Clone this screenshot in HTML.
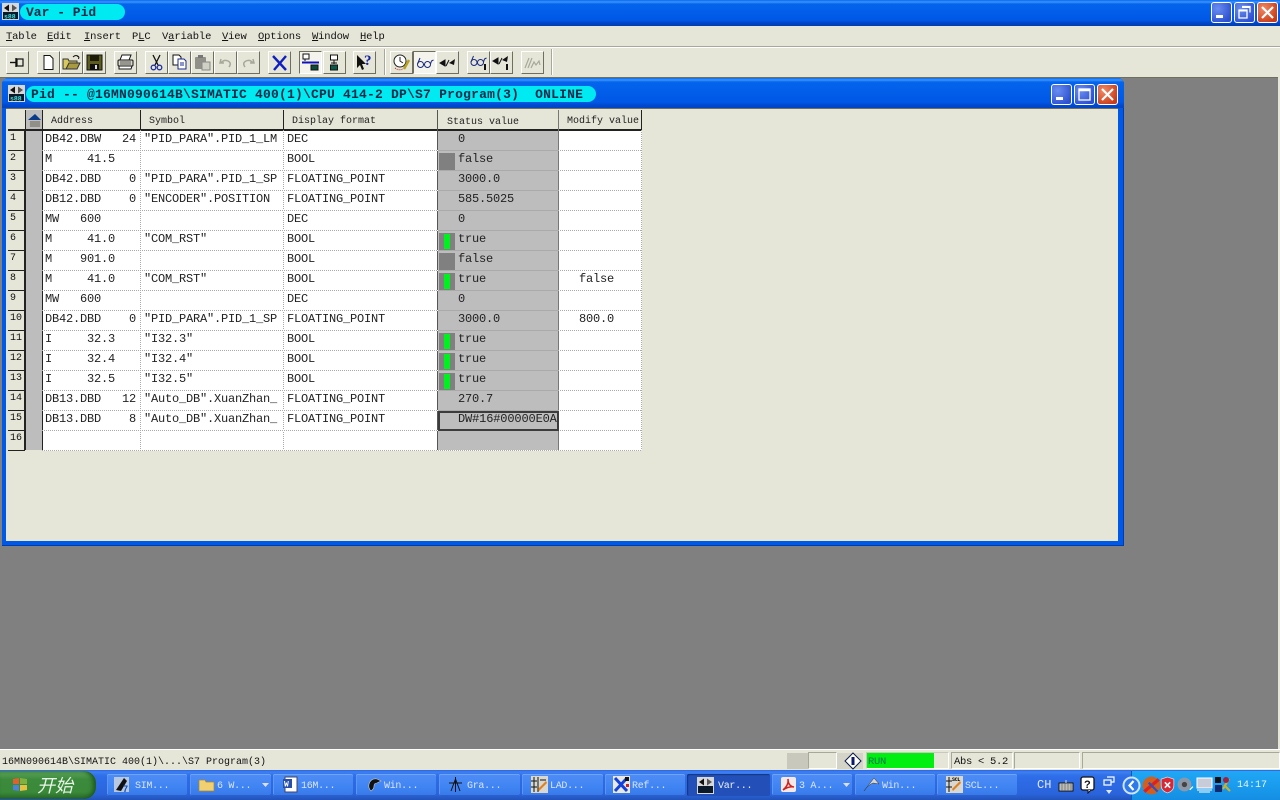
<!DOCTYPE html>
<html><head><meta charset="utf-8"><title>Var - Pid</title>
<style>
html,body{margin:0;padding:0;width:1280px;height:800px;overflow:hidden;background:#808080}
*{box-sizing:border-box}
.a{position:absolute}
body{font-family:"Liberation Mono","Noto Sans CJK SC",monospace;font-size:12px;color:#111}
.t{position:absolute;white-space:pre;line-height:14px}
.tb{position:absolute;top:51px;height:23px;background:#e6e6d8;border:1px solid;border-color:#fff #6f6f60 #6f6f60 #fff}
.tb svg,.ic svg{display:block;width:100%;height:100%}
.pill{position:absolute;background:#00eaf2;border-radius:8px;font-weight:bold;color:#0b2a4a;white-space:pre}
.wb{position:absolute;width:21px;height:21px;border:1px solid #fff;border-radius:3px;background:radial-gradient(circle at 30% 30%,#6a8df0,#2c50d0 80%)}
.wb.c{background:radial-gradient(circle at 30% 30%,#ef8a66,#c93c18 80%)}
.wb svg{display:block;width:19px;height:19px}
.cell{position:absolute;height:14px;line-height:14px;white-space:pre;color:#222;letter-spacing:-.2px}
.rh{position:absolute;left:8px;width:17px;height:20px;background:#e6e6d8;border-bottom:1px solid #222;border-right:1px solid #222;font-size:10px;line-height:16px;padding-left:2px;color:#111}
.hl{position:absolute;left:42px;width:599px;height:1px;background:repeating-linear-gradient(90deg,#aaa 0 1px,#fff 1px 2px)}
.hls{position:absolute;left:438px;width:120px;height:1px;background:#aaa}
.vl{position:absolute;top:130px;height:320px;width:1px;background:repeating-linear-gradient(180deg,#aaa 0 1px,#fff 1px 2px)}
.lamp{position:absolute;left:439px;width:16px;height:17px;background:#808080}
.lamp i{position:absolute;left:5px;top:1px;width:6px;height:15px;background:#00f020}
.h{position:absolute;top:110px;height:20px;background:#e6e6d8;border-right:1px solid #222;font-size:10px;line-height:24px;white-space:pre;color:#222;overflow:hidden}
.btn{position:absolute;top:774px;height:22px;background:linear-gradient(180deg,#4f8df5,#3f84f3 60%,#3878ea);border-radius:2px;box-shadow:inset 0 1px 0 #6ea4fb,inset 0 -1px 0 #2a5fcc,inset 1px 0 0 #5c96f7;color:#d8e4ff;font-size:10px;letter-spacing:-.3px;line-height:22px;white-space:pre}
.btn.act{background:#2250b8;box-shadow:inset 1px 1px 1px #15347f;color:#e8eeff}
.ic{position:absolute;width:17px;height:17px;top:2px;left:6px}
.btn span{position:absolute;top:2px;left:28px}
.sb{position:absolute;top:752px;height:17px;border:1px solid;border-color:#a8a89a #fff #fff #a8a89a}
.m{position:absolute;top:30px;line-height:14px;font-size:10.5px;letter-spacing:-.15px;white-space:pre;color:#111}
.m u{text-decoration:underline}
</style></head><body>

<!-- main title bar -->
<div class="a" style="left:0;top:0;width:1280px;height:26px;background:linear-gradient(180deg,#0a6af0 0,#3a93ff 2px,#0464ec 4px,#0058e6 20px,#0046c8 23px,#003cb0 26px)"></div>
<svg class="a" style="left:2px;top:3px" width="17" height="17" viewBox="0 0 17 17"><rect width="17" height="17" fill="#d8d8d8"/><path d="M2 5l5-3.500v7z" fill="#111"/><path d="M15 5l-5-3.500v7z" fill="#555"/><rect x="1" y="9" width="15" height="7" fill="#0a1a2a"/><text x="2" y="15.500" font-size="6.500" font-family="Liberation Mono" fill="#3fe0e0" font-weight="bold">s88</text></svg>
<div class="pill" style="left:20px;top:4px;width:105px;height:16px;line-height:18px;padding-left:6px;font-size:13px;border-radius:8px">Var - Pid</div>
<div class="wb" style="left:1211px;top:2px"><svg viewBox="0 0 19 19"><rect x="4" y="12" width="7" height="3" fill="#fff"/></svg></div>
<div class="wb" style="left:1234px;top:2px"><svg viewBox="0 0 19 19"><path d="M7 3.500h8v6M4 7h8v8H4z" fill="none" stroke="#fff" stroke-width="1.300"/><path d="M7 4h8M4 7.500h8" stroke="#fff" stroke-width="2"/></svg></div>
<div class="wb c" style="left:1257px;top:2px"><svg viewBox="0 0 19 19"><path d="M4 4l11 11M15 4L4 15" stroke="#fff" stroke-width="2.200"/></svg></div>

<!-- menu -->
<div class="a" style="left:0;top:26px;width:1280px;height:51px;background:#e6e6d8"></div>
<div class="a" style="left:0;top:46px;width:1280px;height:1px;background:#a8a89a"></div>
<div class="a" style="left:0;top:47px;width:1280px;height:1px;background:#fff"></div>
<div class="m" style="left:6px"><u>T</u>able</div>
<div class="m" style="left:47px"><u>E</u>dit</div>
<div class="m" style="left:84px"><u>I</u>nsert</div>
<div class="m" style="left:132px">P<u>L</u>C</div>
<div class="m" style="left:162px">V<u>a</u>riable</div>
<div class="m" style="left:222px"><u>V</u>iew</div>
<div class="m" style="left:258px"><u>O</u>ptions</div>
<div class="m" style="left:312px"><u>W</u>indow</div>
<div class="m" style="left:360px"><u>H</u>elp</div>

<!-- toolbar -->
<div class="tb" style="left:6px;width:23px"><svg viewBox="0 0 21 21"><path d="M3 10.500h6" stroke="#111" stroke-width="1.400"/><path d="M9 6v9" stroke="#111" stroke-width="1.400"/><rect x="10" y="7" width="6" height="7" fill="#e6e6d8" stroke="#111" stroke-width="1.200"/></svg></div>
<div class="tb" style="left:37px;width:23px"><svg viewBox="0 0 21 21"><path d="M6 3.500h6l3 3v11H6z" fill="#fff" stroke="#111"/></svg></div>
<div class="tb" style="left:60px;width:23px"><svg viewBox="0 0 21 21"><path d="M2 7h5l1 2h8v8H2z" fill="#d8c860" stroke="#333"/><path d="M5 17l3-6h11l-3 6z" fill="#a89a40" stroke="#333"/><path d="M12 5q3-3 6 0M18 5l-2-1M18 5l-.5 2" fill="none" stroke="#111"/></svg></div>
<div class="tb" style="left:83px;width:23px"><svg viewBox="0 0 21 21"><rect x="3" y="3" width="15" height="15" fill="#5c5c20" stroke="#111"/><rect x="6" y="3" width="9" height="6" fill="#1c1c08"/><rect x="6" y="12" width="9" height="6" fill="#111"/><rect x="11" y="13" width="2" height="4" fill="#ddd"/></svg></div>
<div class="tb" style="left:114px;width:23px"><svg viewBox="0 0 21 21"><path d="M7 3h9l-2 5H5z" fill="#fff" stroke="#111"/><rect x="3" y="8" width="15" height="6" rx="1" fill="#d8d8c8" stroke="#111"/><path d="M4 14h13l-1 3H4z" fill="#fff" stroke="#111"/><path d="M5 10h11M5 12h11" stroke="#555"/></svg></div>
<div class="tb" style="left:145px;width:23px"><svg viewBox="0 0 21 21"><path d="M7 3l5 10M14 3L9 13" stroke="#111" stroke-width="1.300"/><circle cx="7.500" cy="15.500" r="2.300" fill="none" stroke="#2030a0" stroke-width="1.300"/><circle cx="13.500" cy="15.500" r="2.300" fill="none" stroke="#2030a0" stroke-width="1.300"/></svg></div>
<div class="tb" style="left:168px;width:23px"><svg viewBox="0 0 21 21"><path d="M4 3h6l2 2v8H4z" fill="#fff" stroke="#111"/><path d="M9 7h6l2 2v8H9z" fill="#fff" stroke="#1a2a90"/><path d="M11 11h4M11 13h4" stroke="#1a2a90"/></svg></div>
<div class="tb" style="left:191px;width:23px"><svg viewBox="0 0 21 21"><rect x="3" y="5" width="11" height="12" rx="1" fill="#909088"/><rect x="6" y="3" width="5" height="3" fill="#777"/><rect x="10" y="10" width="8" height="8" fill="#d0d0c4" stroke="#888"/></svg></div>
<div class="tb" style="left:214px;width:23px"><svg viewBox="0 0 21 21"><path d="M6 7l-1 4h4M6 11q3-4 7-2t1 6" fill="none" stroke="#a8a89a" stroke-width="1.500"/></svg></div>
<div class="tb" style="left:237px;width:23px"><svg viewBox="0 0 21 21"><path d="M15 7l1 4h-4M15 11q-3-4-7-2T7 15" fill="none" stroke="#a8a89a" stroke-width="1.500"/></svg></div>
<div class="tb" style="left:268px;width:23px"><svg viewBox="0 0 21 21"><path d="M4 4l13 14M17 4L5 18" stroke="#1020c0" stroke-width="2.400"/></svg></div>
<div class="tb" style="left:299px;width:23px;background:#f4f4ec;border-color:#6f6f60 #fff #fff #6f6f60"><svg viewBox="0 0 21 21"><rect x="3" y="2" width="6" height="5" fill="#fff" stroke="#111"/><path d="M5 7v2" stroke="#111"/><path d="M2 10.500h17" stroke="#1010c0" stroke-width="2"/><rect x="11" y="13" width="7" height="5" fill="#0a4a3a" stroke="#111"/></svg></div>
<div class="tb" style="left:323px;width:23px"><svg viewBox="0 0 21 21"><rect x="6.500" y="3" width="7" height="5" fill="#fff" stroke="#111"/><path d="M10 8v4M7 11h6" stroke="#111"/><rect x="6.500" y="13" width="7" height="5" fill="#0a5a4a" stroke="#111"/></svg></div>
<div class="tb" style="left:353px;width:23px"><svg viewBox="0 0 21 21"><path d="M3 3v13l3-3 2 5 2-1-2-5h4z" fill="#111"/><text x="10" y="13" font-size="15" font-weight="bold" font-family="Liberation Serif" fill="#1020a0">?</text></svg></div>
<div class="a" style="left:384px;top:49px;width:1px;height:26px;background:#a8a89a"></div>
<div class="a" style="left:385px;top:49px;width:1px;height:26px;background:#fff"></div>
<div class="tb" style="left:390px;width:23px"><svg viewBox="0 0 21 21"><circle cx="9" cy="9" r="6" fill="#fff" stroke="#222"/><path d="M9 5v4l3 2" stroke="#222" fill="none"/><path d="M13 17l5-9" stroke="#b8a020" stroke-width="2.500"/><path d="M4 16q4 3 8 1" stroke="#b02020" fill="none" stroke-dasharray="1 1"/></svg></div>
<div class="tb" style="left:413px;width:23px;background:#f4f4ec;border-color:#6f6f60 #fff #fff #6f6f60"><svg viewBox="0 0 21 21"><circle cx="6.500" cy="12.500" r="3" fill="none" stroke="#1a2a80"/><circle cx="13.500" cy="12.500" r="3" fill="none" stroke="#1a2a80"/><path d="M3.500 12L6 6M9.500 12.500h1M16.500 12l1-3 2-1" fill="none" stroke="#1a2a80"/></svg></div>
<div class="tb" style="left:436px;width:23px"><svg viewBox="0 0 21 21"><path d="M3 11l5-3v6zM9 14l3-6" fill="#111" stroke="#111"/><path d="M18 7l-1 6-5-2z" fill="#111"/></svg></div>
<div class="tb" style="left:467px;width:23px"><svg viewBox="0 0 21 21"><circle cx="6" cy="10.500" r="3" fill="none" stroke="#1a2a80"/><circle cx="12.500" cy="10.500" r="3" fill="none" stroke="#1a2a80"/><path d="M3 10l2.500-6M8.800 10.500h1M15.500 10l1-3 2-1" fill="none" stroke="#1a2a80"/><rect x="16" y="12" width="2" height="6" fill="#111"/></svg></div>
<div class="tb" style="left:490px;width:23px"><svg viewBox="0 0 21 21"><path d="M2 9l5-3v6zM8 12l3-6" fill="#111" stroke="#111"/><path d="M17 4l-1 6-5-2z" fill="#111"/><rect x="15" y="12" width="2" height="6" fill="#111"/></svg></div>
<div class="tb" style="left:521px;width:23px"><svg viewBox="0 0 21 21"><path d="M3 16L7 6M6 16l4-10M9 16l3-6 2 3 3-4 1 4" fill="none" stroke="#a8a89a" stroke-width="1.200"/></svg></div>
<div class="a" style="left:551px;top:49px;width:1px;height:26px;background:#a8a89a"></div>
<div class="a" style="left:552px;top:49px;width:1px;height:26px;background:#fff"></div>

<!-- MDI workspace -->
<div class="a" style="left:0;top:77px;width:1278px;height:1px;background:#6f6f60"></div>
<div class="a" style="left:1278px;top:77px;width:2px;height:673px;background:#e6e6d8"></div>

<!-- child window -->
<div class="a" style="left:2px;top:78px;width:1122px;height:468px;background:#0058e6;border-radius:6px 6px 0 0;border-right:1px solid #003cb0;border-bottom:1px solid #003cb0"></div>
<div class="a" style="left:2px;top:78px;width:1122px;height:30px;border-radius:6px 6px 0 0;background:linear-gradient(180deg,#0a6af0 0,#3a93ff 2px,#0464ec 4px,#0058e6 24px,#0046c8 28px)"></div>
<div class="a" style="left:6px;top:108px;width:1112px;height:433px;background:#e6e6d8;border-top:1px solid #6f6f60"></div>
<svg class="a" style="left:8px;top:85px" width="17" height="17" viewBox="0 0 17 17"><rect width="17" height="17" fill="#d8d8d8"/><path d="M2 5l5-3.500v7z" fill="#111"/><path d="M15 5l-5-3.500v7z" fill="#555"/><rect x="1" y="9" width="15" height="7" fill="#0a1a2a"/><text x="2" y="15.500" font-size="6.500" font-family="Liberation Mono" fill="#3fe0e0" font-weight="bold">s88</text></svg>
<div class="pill" style="left:26px;top:86px;width:570px;height:16px;line-height:18px;padding-left:5px;font-size:13px;letter-spacing:.2px">Pid -- @16MN090614B\SIMATIC 400(1)\CPU 414-2 DP\S7 Program(3)  ONLINE</div>
<div class="wb" style="left:1051px;top:84px"><svg viewBox="0 0 19 19"><rect x="4" y="12" width="7" height="3" fill="#fff"/></svg></div>
<div class="wb" style="left:1074px;top:84px"><svg viewBox="0 0 19 19"><rect x="4" y="4" width="11" height="11" fill="none" stroke="#fff" stroke-width="1.300"/><path d="M4 5h11" stroke="#fff" stroke-width="2.500"/></svg></div>
<div class="wb c" style="left:1097px;top:84px"><svg viewBox="0 0 19 19"><path d="M4 4l11 11M15 4L4 15" stroke="#fff" stroke-width="2.200"/></svg></div>

<!-- table -->
<div class="a" style="left:42px;top:130px;width:599px;height:320px;background:#fff"></div>
<div class="a" style="left:25px;top:130px;width:17px;height:320px;background:#bdbdbd"></div>
<div class="a" style="left:438px;top:130px;width:120px;height:320px;background:#bdbdbd"></div>
<div class="a" style="left:8px;top:130px;width:1px;height:320px;background:#888"></div>
<div class="a" style="left:42px;top:110px;width:1px;height:340px;background:#222"></div>
<div class="a" style="left:25px;top:110px;width:1px;height:340px;background:#222"></div>
<div class="a" style="left:8px;top:110px;width:17px;height:20px;background:#e6e6d8"></div>
<div class="a" style="left:26px;top:110px;width:16px;height:20px;background:#bdbdbd"></div>
<svg class="a" style="left:27px;top:112px" width="15" height="16" viewBox="0 0 15 16"><path d="M1 8l7-6 6 6z" fill="#0a3a8a"/><rect x="2" y="9" width="12" height="6" fill="#e6e6d8"/><path d="M2 10h12M2 12h12M2 14h12M4 9v6M6 9v6M8 9v6M10 9v6M12 9v6" stroke="#333" stroke-width=".6"/></svg>
<div class="h" style="left:43px;width:98px;padding-left:8px">Address</div>
<div class="h" style="left:141px;width:143px;padding-left:8px">Symbol</div>
<div class="h" style="left:284px;width:154px;padding-left:8px">Display format</div>
<div class="h" style="left:438px;width:121px;padding-left:9px;top:111px;height:19px">Status value</div>
<div class="h" style="left:559px;width:83px;padding-left:8px">Modify value</div>
<div class="a" style="left:8px;top:129px;width:634px;height:2px;background:#222"></div>

<div class="vl" style="left:140px"></div><div class="vl" style="left:283px"></div><div class="vl" style="left:641px"></div>
<div class="a" style="left:437px;top:110px;width:1px;height:340px;background:#555"></div>
<div class="a" style="left:558px;top:110px;width:1px;height:340px;background:#777"></div>

<div class="hl" style="top:150px"></div><div class="hl" style="top:170px"></div><div class="hl" style="top:190px"></div><div class="hl" style="top:210px"></div><div class="hl" style="top:230px"></div><div class="hl" style="top:250px"></div><div class="hl" style="top:270px"></div><div class="hl" style="top:290px"></div><div class="hl" style="top:310px"></div><div class="hl" style="top:330px"></div><div class="hl" style="top:350px"></div><div class="hl" style="top:370px"></div><div class="hl" style="top:390px"></div><div class="hl" style="top:410px"></div><div class="hl" style="top:430px"></div><div class="hl" style="top:450px"></div>
<div class="hls" style="top:150px"></div><div class="hls" style="top:170px"></div><div class="hls" style="top:190px"></div><div class="hls" style="top:210px"></div><div class="hls" style="top:230px"></div><div class="hls" style="top:250px"></div><div class="hls" style="top:270px"></div><div class="hls" style="top:290px"></div><div class="hls" style="top:310px"></div><div class="hls" style="top:330px"></div><div class="hls" style="top:350px"></div><div class="hls" style="top:370px"></div><div class="hls" style="top:390px"></div><div class="hls" style="top:410px"></div>

<div class="rh" style="top:131px">1</div><div class="rh" style="top:151px">2</div><div class="rh" style="top:171px">3</div><div class="rh" style="top:191px">4</div><div class="rh" style="top:211px">5</div><div class="rh" style="top:231px">6</div><div class="rh" style="top:251px">7</div><div class="rh" style="top:271px">8</div><div class="rh" style="top:291px">9</div><div class="rh" style="top:311px">10</div><div class="rh" style="top:331px">11</div><div class="rh" style="top:351px">12</div><div class="rh" style="top:371px">13</div><div class="rh" style="top:391px">14</div><div class="rh" style="top:411px">15</div><div class="rh" style="top:431px">16</div>

<!-- rows: address -->
<div class="cell" style="left:45px;top:132px">DB42.DBW   24</div>
<div class="cell" style="left:45px;top:152px">M     41.5</div>
<div class="cell" style="left:45px;top:172px">DB42.DBD    0</div>
<div class="cell" style="left:45px;top:192px">DB12.DBD    0</div>
<div class="cell" style="left:45px;top:212px">MW   600</div>
<div class="cell" style="left:45px;top:232px">M     41.0</div>
<div class="cell" style="left:45px;top:252px">M    901.0</div>
<div class="cell" style="left:45px;top:272px">M     41.0</div>
<div class="cell" style="left:45px;top:292px">MW   600</div>
<div class="cell" style="left:45px;top:312px">DB42.DBD    0</div>
<div class="cell" style="left:45px;top:332px">I     32.3</div>
<div class="cell" style="left:45px;top:352px">I     32.4</div>
<div class="cell" style="left:45px;top:372px">I     32.5</div>
<div class="cell" style="left:45px;top:392px">DB13.DBD   12</div>
<div class="cell" style="left:45px;top:412px">DB13.DBD    8</div>
<!-- symbol -->
<div class="cell" style="left:144px;top:132px">"PID_PARA".PID_1_LM</div>
<div class="cell" style="left:144px;top:172px">"PID_PARA".PID_1_SP</div>
<div class="cell" style="left:144px;top:192px">"ENCODER".POSITION</div>
<div class="cell" style="left:144px;top:232px">"COM_RST"</div>
<div class="cell" style="left:144px;top:272px">"COM_RST"</div>
<div class="cell" style="left:144px;top:312px">"PID_PARA".PID_1_SP</div>
<div class="cell" style="left:144px;top:332px">"I32.3"</div>
<div class="cell" style="left:144px;top:352px">"I32.4"</div>
<div class="cell" style="left:144px;top:372px">"I32.5"</div>
<div class="cell" style="left:144px;top:392px">"Auto_DB".XuanZhan_</div>
<div class="cell" style="left:144px;top:412px">"Auto_DB".XuanZhan_</div>
<!-- format -->
<div class="cell" style="left:287px;top:132px">DEC</div>
<div class="cell" style="left:287px;top:152px">BOOL</div>
<div class="cell" style="left:287px;top:172px">FLOATING_POINT</div>
<div class="cell" style="left:287px;top:192px">FLOATING_POINT</div>
<div class="cell" style="left:287px;top:212px">DEC</div>
<div class="cell" style="left:287px;top:232px">BOOL</div>
<div class="cell" style="left:287px;top:252px">BOOL</div>
<div class="cell" style="left:287px;top:272px">BOOL</div>
<div class="cell" style="left:287px;top:292px">DEC</div>
<div class="cell" style="left:287px;top:312px">FLOATING_POINT</div>
<div class="cell" style="left:287px;top:332px">BOOL</div>
<div class="cell" style="left:287px;top:352px">BOOL</div>
<div class="cell" style="left:287px;top:372px">BOOL</div>
<div class="cell" style="left:287px;top:392px">FLOATING_POINT</div>
<div class="cell" style="left:287px;top:412px">FLOATING_POINT</div>
<!-- status -->
<div class="lamp" style="top:153px"></div><div class="lamp" style="top:233px"><i></i></div><div class="lamp" style="top:253px"></div><div class="lamp" style="top:273px"><i></i></div><div class="lamp" style="top:333px"><i></i></div><div class="lamp" style="top:353px"><i></i></div><div class="lamp" style="top:373px"><i></i></div>
<div class="cell" style="left:458px;top:132px">0</div>
<div class="cell" style="left:458px;top:152px">false</div>
<div class="cell" style="left:458px;top:172px">3000.0</div>
<div class="cell" style="left:458px;top:192px">585.5025</div>
<div class="cell" style="left:458px;top:212px">0</div>
<div class="cell" style="left:458px;top:232px">true</div>
<div class="cell" style="left:458px;top:252px">false</div>
<div class="cell" style="left:458px;top:272px">true</div>
<div class="cell" style="left:458px;top:292px">0</div>
<div class="cell" style="left:458px;top:312px">3000.0</div>
<div class="cell" style="left:458px;top:332px">true</div>
<div class="cell" style="left:458px;top:352px">true</div>
<div class="cell" style="left:458px;top:372px">true</div>
<div class="cell" style="left:458px;top:392px">270.7</div>
<div class="a" style="left:438px;top:411px;width:121px;height:20px;border:2px solid #3c3c3c"></div>
<div class="cell" style="left:458px;top:412px;letter-spacing:-.15px">DW#16#00000E0A</div>
<!-- modify -->
<div class="cell" style="left:579px;top:272px">false</div>
<div class="cell" style="left:579px;top:312px">800.0</div>

<!-- status bar -->
<div class="a" style="left:0;top:749px;width:1280px;height:21px;background:#e6e6d8;border-top:1px solid #fff"></div>
<div class="t" style="left:2px;top:754px;font-size:10px;line-height:14px;padding-top:2px">16MN090614B\SIMATIC 400(1)\...\S7 Program(3)</div>
<div class="a" style="left:787px;top:753px;width:21px;height:16px;background:#c8c8bc"></div>
<div class="sb" style="left:808px;width:29px"></div>
<div class="a" style="left:837px;top:753px;width:26px;height:16px;background:#d4d4c8"></div>
<svg class="a" style="left:844px;top:752px" width="18" height="18" viewBox="0 0 18 18"><path d="M9 1l8 8-8 8-8-8z" fill="#fff" stroke="#0a1a4a"/><rect x="7.500" y="5" width="3" height="8" fill="#0a1a6a"/></svg>
<div class="sb" style="left:866px;width:83px;border-color:#c8c8bc #fff #fff #c8c8bc"></div>
<div class="a" style="left:867px;top:753px;width:67px;height:15px;background:#00ee10"></div>
<div class="t" style="left:868px;top:755px;font-size:10.5px;letter-spacing:-.3px;color:#075">RUN</div>
<div class="sb" style="left:951px;width:62px"></div>
<div class="t" style="left:954px;top:755px;font-size:10.5px;letter-spacing:-.3px">Abs &lt; 5.2</div>
<div class="sb" style="left:1014px;width:66px"></div>
<div class="sb" style="left:1082px;width:198px"></div>

<!-- taskbar -->
<div class="a" style="left:0;top:770px;width:1280px;height:30px;background:linear-gradient(180deg,#2c64e4 0,#3d80f0 2px,#2e6ee8 6px,#2a64dc 24px,#2252b8 30px)"></div>
<div class="a" style="left:0;top:771px;width:96px;height:28px;background:linear-gradient(180deg,#5fa85f,#3c8a3c 30%,#3a8a3a 75%,#2a6a2a);border-radius:0 12px 12px 0;box-shadow:inset -3px 0 4px #1d5a1d"></div>
<svg class="a" style="left:11px;top:776px" width="18" height="18" viewBox="0 0 18 18"><path d="M2 3l6-1v6H2z" fill="#e06030"/><path d="M9 2l7 1v5H9z" fill="#80b040"/><path d="M2 9h6v6l-6-1z" fill="#5080d8"/><path d="M9 9h7v5l-7 1z" fill="#e8c040"/></svg>
<div class="t" style="left:37px;top:774px;font-family:'Noto Sans CJK SC',sans-serif;font-style:italic;font-size:18px;line-height:22px;color:#e8f4e8">开始</div>

<div class="btn" style="left:107px;width:80px"><div class="ic"><svg viewBox="0 0 17 17"><rect x="1" y="1" width="15" height="15" fill="#b8c8e0"/><path d="M3 14L11 2l3 3-6 10z" fill="#111"/><text x="10" y="16" font-size="9" font-weight="bold" fill="#0a50c0" font-family="Liberation Sans">7</text></svg></div><span>SIM...</span></div>
<div class="btn" style="left:190px;width:81px"><div class="ic" style="left:8px"><svg viewBox="0 0 17 17"><path d="M1 4h6l1 2h8v9H1z" fill="#f0d070" stroke="#a88830" stroke-width=".7"/></svg></div><span style="left:27px">6 W...</span><svg class="a" style="left:72px;top:9px" width="7" height="4"><path d="M0 0h7L3.500 4z" fill="#dde"/></svg></div>
<div class="btn" style="left:273px;width:80px"><div class="ic" style="left:9px"><svg viewBox="0 0 17 17"><rect x="3" y="1" width="12" height="15" fill="#fff" stroke="#446"/><rect x="1" y="3" width="9" height="9" fill="#2850a8"/><text x="2" y="10.500" font-size="8" fill="#fff" font-weight="bold">W</text></svg></div><span>16M...</span></div>
<div class="btn" style="left:356px;width:80px"><div class="ic" style="left:10px"><svg viewBox="0 0 17 17"><path d="M3 8q2-6 8-5l4 2-4 2q-3 0-3 3t-3 5q-3-3-2-7z" fill="#111" stroke="#ccc" stroke-width=".6"/></svg></div><span>Win...</span></div>
<div class="btn" style="left:439px;width:81px"><div class="ic" style="left:8px"><svg viewBox="0 0 17 17"><path d="M8.500 1v15M2 7h13M8.500 3L4 15M8.500 3l4.500 12" stroke="#111" fill="none"/></svg></div><span>Gra...</span></div>
<div class="btn" style="left:522px;width:81px"><div class="ic" style="left:9px"><svg viewBox="0 0 17 17"><rect width="17" height="17" fill="#d8d8d0"/><path d="M0 5h6M0 11h6M3 1v15M7 1v15M9 4h6" stroke="#111"/><path d="M8 15l8-8-1-2-8 8z" fill="#e08020"/></svg></div><span>LAD...</span></div>
<div class="btn" style="left:605px;width:80px"><div class="ic" style="left:8px"><svg viewBox="0 0 17 17"><rect width="17" height="17" fill="#e8e8e0"/><path d="M2 2l12 13M14 2L2 15" stroke="#1040e0" stroke-width="3"/><rect x="12" y="1" width="4" height="4" fill="#111"/><rect x="13" y="8" width="3" height="3" fill="#d02020"/></svg></div><span style="left:27px">Ref...</span></div>
<div class="btn act" style="left:687px;width:83px"><div class="ic" style="left:10px;top:3px"><svg viewBox="0 0 17 17"><rect width="17" height="17" fill="#d8d8d8"/><path d="M2 5l5-3.500v7z" fill="#111"/><path d="M15 5l-5-3.500v7z" fill="#555"/><rect x="1" y="9" width="15" height="7" fill="#0a1a2a"/></svg></div><span style="left:31px">Var...</span></div>
<div class="btn" style="left:772px;width:80px"><div class="ic" style="left:8px"><svg viewBox="0 0 17 17"><rect x="1" y="1" width="15" height="15" rx="2" fill="#f4e8e8"/><path d="M8 3q1 6-5 11 6-4 11-3-6-1-6-8z" fill="none" stroke="#d02020" stroke-width="1.500"/></svg></div><span style="left:27px">3 A...</span><svg class="a" style="left:71px;top:9px" width="7" height="4"><path d="M0 0h7L3.500 4z" fill="#dde"/></svg></div>
<div class="btn" style="left:855px;width:80px"><div class="ic" style="left:8px"><svg viewBox="0 0 17 17"><path d="M1 15L11 2l5 6-6-1q-5 2-9 8z" fill="#d8d8d0" stroke="#333" stroke-width=".5"/></svg></div><span style="left:27px">Win...</span></div>
<div class="btn" style="left:937px;width:80px"><div class="ic" style="left:9px"><svg viewBox="0 0 17 17"><rect width="17" height="17" fill="#d8d8d0"/><path d="M0 5h6M0 11h6M3 1v15" stroke="#111"/><path d="M7 15l8-8-1-2-8 8z" fill="#e08020"/><text x="6" y="5" font-size="5" font-weight="bold">SCL</text></svg></div><span style="left:28px">SCL...</span></div>

<div class="t" style="left:1037px;top:778px;color:#dfe8ff;font-size:12px">CH</div>
<svg class="a" style="left:1058px;top:777px" width="16" height="16" viewBox="0 0 16 16"><rect x="1" y="6" width="14" height="8" fill="#e0e0d8" stroke="#111"/><path d="M2 8h12M2 10h12M2 12h12M4 6v8M7 6v8M10 6v8M13 6v8" stroke="#555" stroke-width=".6"/><path d="M8 6V3" stroke="#ddd"/></svg>
<svg class="a" style="left:1080px;top:776px" width="16" height="18" viewBox="0 0 16 18"><rect x="1" y="1" width="13" height="13" rx="2" fill="#fff" stroke="#111" stroke-width="1.300"/><text x="4" y="12" font-size="11" font-weight="bold" fill="#111" font-family="Liberation Sans">?</text><path d="M8 14v3l3-3" fill="#fff" stroke="#111"/></svg>
<svg class="a" style="left:1103px;top:775px" width="12" height="20" viewBox="0 0 12 20"><path d="M4 2h7v5H8M1 5h7v5H1z" fill="none" stroke="#fff" stroke-width="1.200"/><path d="M3 15h6l-3 4z" fill="#e0e8ff"/></svg>

<!-- tray -->
<div class="a" style="left:1131px;top:771px;width:149px;height:29px;background:linear-gradient(180deg,#20a8f4,#1a9cee 50%,#148ee2);border-left:1px solid #0a5cb8"></div>
<svg class="a" style="left:1122px;top:776px" width="19" height="19" viewBox="0 0 19 19"><circle cx="9.500" cy="9.500" r="9" fill="#cfe4ff"/><circle cx="9.500" cy="9.500" r="7" fill="#2d7ae8"/><path d="M11.500 5l-4 4.500 4 4.500" fill="none" stroke="#fff" stroke-width="2.200"/></svg>
<svg class="a" style="left:1142px;top:776px" width="19" height="19" viewBox="0 0 17 17"><circle cx="8.500" cy="8.500" r="8" fill="#d06020"/><path d="M2 14L15 3" stroke="#e02020" stroke-width="3"/><path d="M6 6l8 8" stroke="#3050c0" stroke-width="2"/></svg>
<svg class="a" style="left:1160px;top:776px" width="15" height="18" viewBox="0 0 14 17"><path d="M7 1l6 2v6q0 5-6 7-6-2-6-7V3z" fill="#d82838" stroke="#ddd" stroke-width=".7"/><path d="M4.500 6l5 5M9.500 6l-5 5" stroke="#fff" stroke-width="1.500"/></svg>
<svg class="a" style="left:1177px;top:776px" width="17" height="17" viewBox="0 0 16 16"><circle cx="7" cy="8" r="6.500" fill="#8c98a8"/><circle cx="7" cy="8" r="2.500" fill="#444"/><path d="M12 13l3-3" stroke="#dfe" stroke-width="1.200"/></svg>
<svg class="a" style="left:1196px;top:777px" width="17" height="16" viewBox="0 0 17 16"><rect x="1" y="1" width="15" height="10" fill="#c8ccd8" stroke="#fff"/><path d="M1 13h15M3 15h11" stroke="#fff"/></svg>
<svg class="a" style="left:1214px;top:776px" width="17" height="17" viewBox="0 0 17 17"><rect x="1" y="1" width="6" height="6" fill="#111"/><rect x="1" y="9" width="7" height="7" fill="#102a70"/><path d="M9 13L15 3" stroke="#d0b020" stroke-width="2"/><circle cx="12" cy="4" r="3" fill="#a02040"/><path d="M10 9l6 6" stroke="#d0b020" stroke-width="2"/></svg>
<div class="t" style="left:1237px;top:778px;color:#e8f4ff;font-size:10px;line-height:14px;padding-top:1px">14:17</div>
</body></html>
